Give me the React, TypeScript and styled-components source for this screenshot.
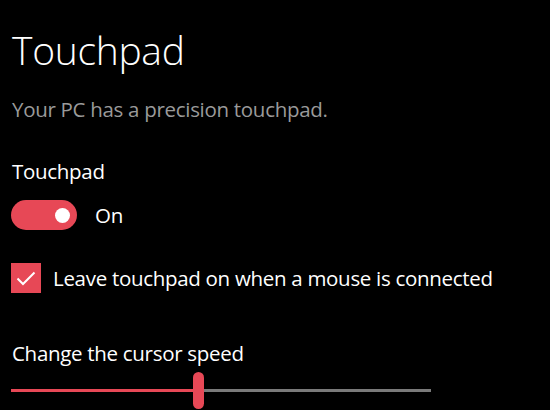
import React from "react";
import styled, { createGlobalStyle } from "styled-components";

const ACCENT = "#e74856";

const Global = createGlobalStyle`
  html, body { margin: 0; padding: 0; background: #000; }
  body { font-family: "Open Sans", "Noto Sans", sans-serif; color: #fff; }
`;

const Page = styled.div`
  width: 550px;
  height: 410px;
  overflow: hidden;
  box-sizing: border-box;
  padding: 23px 0 0 11px;
  display: flex;
  flex-direction: column;
`;

const Title = styled.h1`
  margin: 0 0 0 1px;
  font-size: 39px;
  font-weight: 300;
  line-height: 54px;
  letter-spacing: -0.3px;
`;

const Subtitle = styled.p`
  margin: 18px 0 0 1px;
  font-size: 20.5px;
  line-height: 28px;
  color: #9a9a9a;
  letter-spacing: -0.3px;
`;

const Label = styled.div<{ $top: number }>`
  margin: ${(p) => p.$top}px 0 0 1px;
  font-size: 20.5px;
  line-height: 28px;
  color: #fff;
  letter-spacing: -0.3px;
`;

const Row = styled.div<{ $top: number; $gap: number }>`
  margin-top: ${(p) => p.$top}px;
  display: flex;
  align-items: center;
  gap: ${(p) => p.$gap}px;
`;

const ToggleTrack = styled.div<{ $on: boolean }>`
  width: 66px;
  height: 30px;
  border-radius: 15px;
  background: ${(p) => (p.$on ? ACCENT : "transparent")};
  position: relative;
  flex: none;
`;

const ToggleKnob = styled.div<{ $on: boolean }>`
  position: absolute;
  top: 7.5px;
  left: ${(p) => (p.$on ? 43.5 : 7.5)}px;
  width: 15px;
  height: 15px;
  border-radius: 50%;
  background: #fff;
`;

const RowText = styled.span`
  font-size: 20.5px;
  line-height: 28px;
  letter-spacing: -0.3px;
`;

const CheckBox = styled.div`
  width: 30px;
  height: 30px;
  background: ${ACCENT};
  display: flex;
  align-items: center;
  justify-content: center;
  flex: none;
`;

const Slider = styled.div`
  margin-top: 5px;
  width: 420px;
  height: 37px;
  display: flex;
  align-items: center;
`;

const TrackFill = styled.div`
  height: 3px;
  background: ${ACCENT};
  flex: none;
`;

const TrackRest = styled.div`
  height: 3px;
  background: #7a7a7a;
  flex: 1;
`;

const Thumb = styled.div`
  width: 11px;
  height: 37px;
  border-radius: 6px;
  background: ${ACCENT};
  flex: none;
`;

export default function App() {
  const value = 182 / 420;
  return (
    <>
      <Global />
      <Page>
        <Title>Touchpad</Title>
        <Subtitle>Your PC has a precision touchpad.</Subtitle>
        <Label $top={34}>Touchpad</Label>
        <Row $top={15} $gap={18}>
          <ToggleTrack $on>
            <ToggleKnob $on />
          </ToggleTrack>
          <RowText>On</RowText>
        </Row>
        <Row $top={33} $gap={12}>
          <CheckBox>
            <svg width="20" height="16" viewBox="0 0 20 16">
              <path d="M1.5 8.5 L7 14 L18.5 2.5" fill="none" stroke="#fff" strokeWidth="2" />
            </svg>
          </CheckBox>
          <RowText>Leave touchpad on when a mouse is connected</RowText>
        </Row>
        <Label $top={46}>Change the cursor speed</Label>
        <Slider>
          <TrackFill style={{ width: `${value * 420}px` }} />
          <Thumb />
          <TrackRest />
        </Slider>
      </Page>
    </>
  );
}
